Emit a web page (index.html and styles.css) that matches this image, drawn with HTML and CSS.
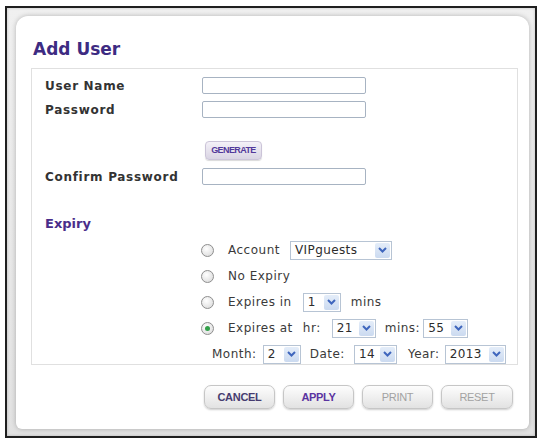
FILE: index.html
```html
<!DOCTYPE html>
<html lang="en">
<head>
    <meta charset="UTF-8">
    <meta name="viewport" content="width=device-width, initial-scale=1.0">
    <title>Add User</title>
    <link rel="stylesheet" href="styles.css">
</head>
<body>
    <div class="frame">
        <div class="panel">
            <h1 class="title">Add User</h1>

            <div class="form-box">
                <!-- Account credentials -->
                <div class="field-row">
                    <label class="field-label" for="user-name">User Name</label>
                    <input type="text" id="user-name" class="text-input">
                </div>
                <div class="field-row gap-small">
                    <label class="field-label" for="password">Password</label>
                    <input type="password" id="password" class="text-input">
                </div>
                <div class="generate-row">
                    <button class="btn-generate">GENERATE</button>
                </div>
                <div class="field-row confirm-row">
                    <label class="field-label" for="confirm-password">Confirm Password</label>
                    <input type="password" id="confirm-password" class="text-input">
                </div>

                <!-- Expiry options -->
                <div class="section-title">Expiry</div>
                <div class="expiry-options">
                    <div class="option-row">
                        <span class="radio"></span>
                        <span class="opt-text">Account</span>
                        <div class="select sel-vip"><span class="sel-value">VIPguests</span><span class="sel-arrow"><svg width="9" height="6" viewBox="0 0 9 6"><path d="M1 1l3.5 3.5L8 1" fill="none" stroke="#3f66bd" stroke-width="2"/></svg></span></div>
                    </div>
                    <div class="option-row">
                        <span class="radio"></span>
                        <span class="opt-text">No Expiry</span>
                    </div>
                    <div class="option-row">
                        <span class="radio"></span>
                        <span class="opt-text">Expires in</span>
                        <div class="select sel-in"><span class="sel-value">1</span><span class="sel-arrow"><svg width="9" height="6" viewBox="0 0 9 6"><path d="M1 1l3.5 3.5L8 1" fill="none" stroke="#3f66bd" stroke-width="2"/></svg></span></div>
                        <span class="opt-text after-in">mins</span>
                    </div>
                    <div class="option-row">
                        <span class="radio checked"></span>
                        <span class="opt-text">Expires at</span>
                        <span class="opt-text lbl-hr">hr:</span>
                        <div class="select sel-hr"><span class="sel-value">21</span><span class="sel-arrow"><svg width="9" height="6" viewBox="0 0 9 6"><path d="M1 1l3.5 3.5L8 1" fill="none" stroke="#3f66bd" stroke-width="2"/></svg></span></div>
                        <span class="opt-text lbl-mins">mins:</span>
                        <div class="select sel-mins"><span class="sel-value">55</span><span class="sel-arrow"><svg width="9" height="6" viewBox="0 0 9 6"><path d="M1 1l3.5 3.5L8 1" fill="none" stroke="#3f66bd" stroke-width="2"/></svg></span></div>
                    </div>
                    <div class="option-row date-row">
                        <span class="opt-text">Month:</span>
                        <div class="select sel-month"><span class="sel-value">2</span><span class="sel-arrow"><svg width="9" height="6" viewBox="0 0 9 6"><path d="M1 1l3.5 3.5L8 1" fill="none" stroke="#3f66bd" stroke-width="2"/></svg></span></div>
                        <span class="opt-text lbl-date">Date:</span>
                        <div class="select sel-date"><span class="sel-value">14</span><span class="sel-arrow"><svg width="9" height="6" viewBox="0 0 9 6"><path d="M1 1l3.5 3.5L8 1" fill="none" stroke="#3f66bd" stroke-width="2"/></svg></span></div>
                        <span class="opt-text lbl-year">Year:</span>
                        <div class="select sel-year"><span class="sel-value">2013</span><span class="sel-arrow"><svg width="9" height="6" viewBox="0 0 9 6"><path d="M1 1l3.5 3.5L8 1" fill="none" stroke="#3f66bd" stroke-width="2"/></svg></span></div>
                    </div>
                </div>
            </div>

            <div class="actions">
                <button class="btn btn-cancel">CANCEL</button>
                <button class="btn btn-apply">APPLY</button>
                <button class="btn btn-off">PRINT</button>
                <button class="btn btn-off btn-reset">RESET</button>
            </div>
        </div>
    </div>
</body>
</html>
```

FILE: styles.css
```css
* {
    box-sizing: border-box;
    margin: 0;
    padding: 0;
}

body {
    font-family: 'DejaVu Sans', Verdana, sans-serif;
    background-color: #fff;
    padding: 6px 0 0 5px;
}

/* outer window with the grey bevel */
.frame {
    width: 532px;
    border: 2px solid #1f1f1f;
    background: linear-gradient(#f0f0f0, #e2e2e2);
    box-shadow: inset 0 0 3px rgba(0, 0, 0, 0.2);
    padding: 8px 6px 7px 9px;
}

.panel {
    background-color: #fff;
    border-radius: 12px 12px 6px 6px;
    box-shadow: 0 0 5px rgba(0, 0, 0, 0.25);
    padding: 23px 11px 20px 15px;
}

.title {
    font-size: 17px;
    line-height: 20px;
    font-weight: bold;
    color: #3d2b82;
    padding-left: 2px;
    margin-bottom: 9px;
}

.form-box {
    border: 1px solid #e0e0e0;
    padding: 8px 0 0 13px;
}

.field-row {
    display: flex;
    align-items: center;
    height: 17px;
}

.field-row.gap-small {
    margin-top: 7px;
}

.field-row.confirm-row {
    margin-top: 11px;
}

.field-label {
    width: 157px;
    font-size: 12px;
    font-weight: bold;
    letter-spacing: 0.7px;
    color: #333;
}

.text-input {
    width: 164px;
    height: 17px;
    border: 1px solid #a7b3c2;
    border-radius: 2px;
    background-color: #fff;
}

.generate-row {
    margin-top: 20px;
    padding-left: 160px;
    height: 19px;
}

.btn-generate {
    width: 57px;
    height: 19px;
    font-family: 'Liberation Sans', Arial, sans-serif;
    font-size: 9px;
    font-weight: bold;
    letter-spacing: -0.6px;
    color: #52389a;
    background: linear-gradient(#f4f1f8, #d9d4e3);
    border: 1px solid #cbc4d8;
    border-radius: 4px;
    box-shadow: 0 1px 1px rgba(0, 0, 0, 0.15);
}

.section-title {
    margin-top: 31px;
    font-size: 13px;
    line-height: 16px;
    font-weight: bold;
    color: #4a2d8a;
}

.expiry-options {
    margin-top: 8px;
    padding-left: 156px;
    display: flex;
    flex-direction: column;
    gap: 6px;
}

.option-row {
    display: flex;
    align-items: center;
    height: 20px;
}

.date-row {
    padding-left: 11px;
}

.opt-text {
    font-size: 12px;
    letter-spacing: 0.5px;
    color: #3a3a3a;
    white-space: nowrap;
}

.radio {
    width: 13px;
    height: 13px;
    border-radius: 50%;
    border: 1px solid #8e8e8e;
    background: radial-gradient(circle at 40% 35%, #fff, #d6d6d6);
    margin-right: 14px;
    display: flex;
    align-items: center;
    justify-content: center;
}

.radio.checked::after {
    content: "";
    width: 5px;
    height: 5px;
    border-radius: 50%;
    background-color: #33a04a;
}

/* dropdowns */
.select {
    display: flex;
    align-items: center;
    justify-content: space-between;
    height: 19px;
    border: 1px solid #b7c4d4;
    background-color: #fff;
    padding: 1px;
}

.sel-value {
    font-size: 12px;
    letter-spacing: 0.4px;
    color: #2c2c2c;
    padding-left: 3px;
}

.sel-arrow {
    width: 15px;
    height: 15px;
    background: linear-gradient(#e4edf9, #cbdaf0);
    border-radius: 2px;
    display: flex;
    align-items: center;
    justify-content: center;
}

.sel-vip { width: 102px; margin-left: 10px; }
.sel-in { width: 38px; margin-left: 11px; }
.after-in { margin-left: 10px; }
.lbl-hr { margin-left: 10px; }
.sel-hr { width: 44px; margin-left: 11px; }
.lbl-mins { margin-left: 9px; }
.sel-mins { width: 45px; margin-left: 3px; }
.sel-month { width: 38px; margin-left: 6px; }
.lbl-date { margin-left: 9px; }
.sel-date { width: 43px; margin-left: 9px; }
.lbl-year { margin-left: 11px; }
.sel-year { width: 61px; margin-left: 5px; }

/* bottom buttons */
.actions {
    margin-top: 20px;
    padding-right: 5px;
    display: flex;
    justify-content: flex-end;
    gap: 8px;
}

.btn {
    width: 71px;
    height: 24px;
    font-family: 'Liberation Sans', Arial, sans-serif;
    font-size: 11px;
    letter-spacing: -0.3px;
    background: linear-gradient(#fdfdfd, #e2e2e2);
    border: 1px solid #c6c6c6;
    border-radius: 7px;
    box-shadow: 0 1px 2px rgba(0, 0, 0, 0.2);
}

.btn-cancel {
    color: #463c70;
    font-weight: bold;
}

.btn-apply {
    color: #5a34a0;
    font-weight: bold;
}

.btn-off {
    color: #a2a2a2;
}

.btn-reset {
    width: 72px;
}
```
